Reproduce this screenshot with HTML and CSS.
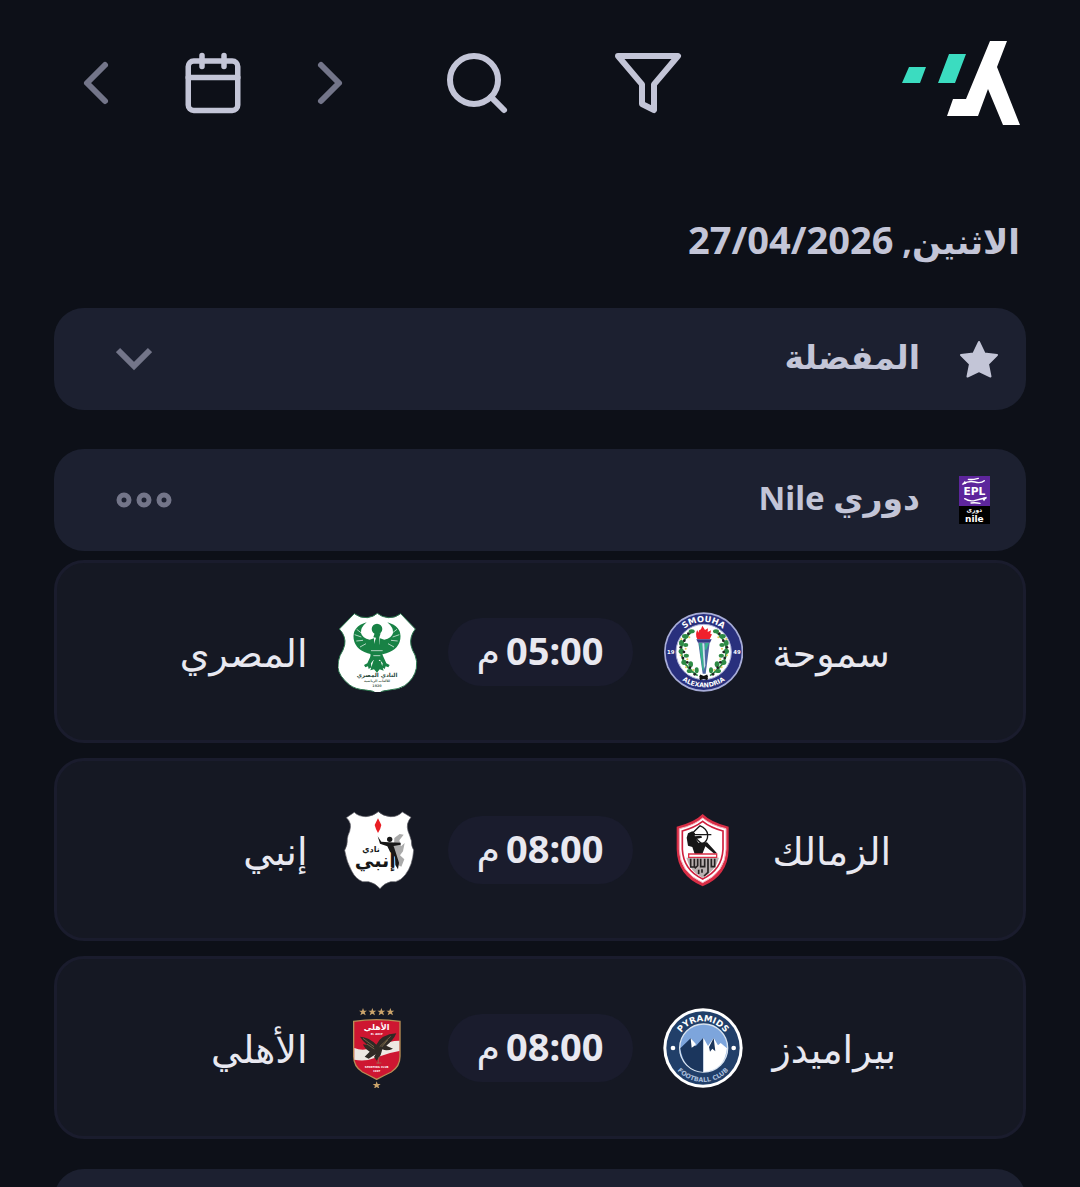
FILE: index.html
```html
<!DOCTYPE html>
<html lang="ar" dir="rtl">

<head>
    <meta charset="UTF-8">
    <meta name="viewport" content="width=device-width, initial-scale=1.0">
    <title>المباريات</title>
    <link rel="stylesheet" href="styles.css">
</head>

<body>
    <header>
        <a class="logo" href="#" aria-label="الرئيسية">
            <svg viewBox="0 0 117 84">
                <path fill="#3bdcc0" d="M6 26h17l-6 16H-1zM46 13h17L52 42H35z" />
                <path fill="#fff" d="M87 0h17l-10 26 23 58h-17L85 48 75 75H44l6-17h13z" />
            </svg>
        </a>
        <button class="filter" aria-label="تصفية">
            <svg class="icon" viewBox="0 0 24 24"><path d="M22 3H2l8 9.46V19l4 2v-8.54z" /></svg>
        </button>
        <button class="search" aria-label="بحث">
            <svg class="icon" viewBox="0 0 24 24"><circle cx="11" cy="11" r="8" /><path d="M21 21l-4.35-4.35" /></svg>
        </button>
        <nav>
            <button class="arrow" aria-label="اليوم التالي">
                <svg class="icon" viewBox="0 0 24 24"><path d="M9 18l6-6-6-6" /></svg>
            </button>
            <button class="calendar" aria-label="التقويم">
                <svg class="icon" viewBox="0 0 24 24"><rect x="3" y="4" width="18" height="18" rx="2" /><path d="M16 2v4M8 2v4M3 10h18" /></svg>
            </button>
            <button class="arrow" aria-label="اليوم السابق">
                <svg class="icon" viewBox="0 0 24 24"><path d="M15 18l-6-6 6-6" /></svg>
            </button>
        </nav>
    </header>

    <main>
        <h1>الاثنين, <span class="num">27/04/2026</span></h1>

        <section class="bar favorites">
            <svg class="star" viewBox="0 0 40 38"><path d="M20 2l5.500 11.500 12.500 1.500-9 9 2.500 12.500L20 31 8.500 36.500 11 24l-9-9 12.500-1.500z" /></svg>
            <h2>المفضلة</h2>
            <button aria-label="عرض المفضلة">
                <svg class="chevron" viewBox="0 0 36 24"><path d="M2 3l16 16L34 3" /></svg>
            </button>
        </section>

        <section class="league">
            <div class="bar">
                <svg class="epl" viewBox="120 108 93 144">
                    <path fill="#5d259c" d="M120 108h93v90h-93z" />
                    <path fill="#000" d="M120 198h93v54h-93z" />
                    <g fill="none" stroke="#fff" stroke-linecap="round" stroke-width="4">
                        <path d="M132 132q18-11 36-6t28-4M148 118q10 2 30-3M137 176q15 10 32 5t32-7M156 189q14-2 27 1" />
                    </g>
                    <path fill="#fff" d="M128 134l10-12 4 9zM204 170l-9 14-6-10z" />
                    <text class="epl-name" x="166" y="164">EPL</text>
                    <text class="epl-ar" x="166" y="215">دورى</text>
                    <text class="epl-nile" x="166" y="245">nile</text>
                </svg>
                <h2>دوري Nile</h2>
                <button aria-label="خيارات">
                    <svg class="dots" viewBox="0 0 56 16"><circle cx="8" cy="8" r="5" /><circle cx="28" cy="8" r="5" /><circle cx="48" cy="8" r="5" /></svg>
                </button>
            </div>

            <ul>
                <li>
                    <span class="home">سموحة</span>
                    <svg class="crest" viewBox="38 33 240 240">
                        <circle cx="160" cy="153" r="119" fill="#a8add8" />
                        <circle cx="160" cy="153" r="114" fill="#29307d" />
                        <circle cx="160" cy="153" r="83" fill="#fff" stroke="#a8add8" stroke-width="3" />
                        <path id="smTop" fill="none" d="M70 153a90 90 0 0 1 180 0" />
                        <path id="smBottom" fill="none" d="M54 153a106 106 0 0 0 212 0" />
                        <text class="smouha-top"><textPath href="#smTop" startOffset="50%">SMOUHA</textPath></text>
                        <text class="smouha-bottom"><textPath href="#smBottom" startOffset="50%">ALEXANDRIA</textPath></text>
                        <text class="year" x="61" y="158">19</text>
                        <text class="year" x="260" y="158">49</text>
                        <g id="wreath">
                            <path fill="none" stroke="#2e8b45" stroke-width="5" d="M126 91Q91 118 93 155T142 224" />
                            <g fill="#2e8b45">
                                <ellipse cx="124" cy="91" rx="9" ry="6" /><ellipse cx="105" cy="106" rx="10" ry="7" /><ellipse cx="93" cy="126" rx="7" ry="9" />
                                <ellipse cx="106" cy="132" rx="8" ry="6" /><ellipse cx="93" cy="151" rx="8" ry="8" /><ellipse cx="108" cy="164" rx="8" ry="6" />
                                <ellipse cx="101" cy="184" rx="8" ry="8" /><ellipse cx="121" cy="190" rx="7" ry="9" /><ellipse cx="118" cy="210" rx="9" ry="6" /><ellipse cx="139" cy="208" rx="6" ry="9" />
                            </g>
                            <g fill="#202222"><circle cx="114" cy="98" r="4" /><circle cx="102" cy="119" r="4" /><circle cx="91" cy="139" r="4" /><circle cx="101" cy="153" r="4" /><circle cx="98" cy="171" r="4" /><circle cx="111" cy="184" r="4" /><circle cx="119" cy="200" r="4" /><circle cx="133" cy="220" r="4" /></g>
                            <g fill="#e4ca58"><circle cx="117" cy="109" r="3" /><circle cx="93" cy="114" r="3" /><circle cx="106" cy="143" r="3" /><circle cx="91" cy="163" r="3" /><circle cx="111" cy="175" r="3" /><circle cx="107" cy="199" r="3" /><circle cx="129" cy="207" r="3" /></g>
                        </g>
                        <use href="#wreath" transform="matrix(-1 0 0 1 321 0)" />
                        <path fill="#f0202c" d="M141 115q-8-15 0-28l3 8q1-9 8-10l4-11 8 13 9-5-1 11 10-5-2 11 5 1-7 15z" />
                        <path fill="#343b86" d="M138 115h46l-5 10h-36z" />
                        <path fill="#4d67a2" d="M144 125h34l-12 93h-9z" />
                        <path fill="#36b38c" d="M146 126h10l5 85-5-8zM165 126h11l-8 20h-6z" />
                        <path fill="#cfe6ee" d="M156 127h6l3 67-4 10z" />
                        <path stroke="#111" stroke-width="8" d="M148 224l24 10M172 224l-24 10" />
                    </svg>
                    <time datetime="17:00"><span class="num">05:00</span><span>م</span></time>
                    <svg class="crest" viewBox="52 33 240 240">
                        <path fill="#fff" stroke="#2d7950" stroke-width="3" d="M101 38q18 14 39 12 18-2 30-13 13 12 34 13 20 1 36-12l44 46q-18 23-13 49 3 14 12 29 8 19 4 40-6 31-35 52-17 11-46 13-23 1-35 12-13-11-36-12-31-2-48-15-33-27-35-52-1-19 6-36 11-18 14-32 5-26-16-48z" />
                        <g fill="#188245">
                            <circle cx="169" cy="84" r="16" />
                            <path d="M162 97h18l-4 12 1 21 10 15-3 22-17 22-17-22-2-20 12-18 6-19-8-1z" />
                            <path id="wing" d="M138 64q-44 12-39 50 6 36 53 46l10-12-2-36-13 4q-22-4-26-20-2-16 17-32z" />
                            <use href="#wing" transform="matrix(-1 0 0 1 338 0)" />
                            <path d="M153 158l-13 29-10 5 4 7 8-3 2 8 8-5-1-12 12-16zM184 158l13 29 10 5-4 7-8-3-3 8-8-5 2-12-13-16zM158 180h22l9 29-12-4-8 10-9-10-11 3z" />
                        </g>
                        <path fill="none" stroke="#fff" stroke-width="2" d="M108 85l13 10M102 101l20 7M107 120l20-2M118 138l18-10M229 85l-13 10M236 101l-20 7M231 120l-20-2M220 138l-18-10M151 149h35M158 164h21" />
                        <text class="masry" x="169" y="228">النادي المصري</text>
                        <text class="masry-small" x="169" y="244">للألعاب الرياضية</text>
                        <text class="masry-small" x="169" y="259">1920</text>
                    </svg>
                    <span class="away">المصري</span>
                </li>
                <li>
                    <span class="home">الزمالك</span>
                    <svg class="crest" viewBox="38 28 240 240">
                        <path fill="#d92e46" d="M157 40q25 25 78 38v68q-2 80-78 111-76-31-78-111V78q53-13 78-38z" />
                        <path fill="#fff" stroke="#f6b0bd" stroke-width="3" d="M157 52q25 22 70 32v62q-2 69-70 100-69-31-70-100V84q45-10 70-32z" />
                        <path fill="#fff" stroke="#cf1f3d" stroke-width="5" d="M157 62q22 18 61 29v55q-3 62-61 89-58-27-61-89V91q38-11 61-29z" />
                        <path fill="none" stroke="#171717" stroke-width="4" d="M148 75q22 9 24 27 1 20-17 28M149 75l-26 26 31 28M123 102h60" />
                        <path fill="#171717" d="M113 98l13-6 8 6-1 9 20-2 2 6-18 4 7 11 26-1 30 33-8 1-27-22-9 23h-23l-7-21-13-4-4-24z" />
                        <path fill="#b9b0b0" d="M108 171h98q-10 39-49 61-38-20-49-61z" />
                        <path stroke="#262222" stroke-width="5" fill="none" d="M121 174v25h11v-25M142 174v21l-9 8M151 174v24h12v-24M173 174v41l-12 11M183 174v24h10v-24M145 207v13M155 206v10" />
                        <path fill="#fff" stroke="#d92e46" stroke-width="4" d="M115 160h84v10h-84z" />
                    </svg>
                    <time datetime="20:00"><span class="num">08:00</span><span>م</span></time>
                    <svg class="crest" viewBox="52 28 240 240">
                        <path fill="#fff" stroke="#5e5e65" stroke-width="2" d="M77 51l24-16q13 13 35 13 21-1 37-15 14 13 36 15 22 1 36-14l26 16q-16 18-9 41 6 15 10 29 0 18 7 28-3 46-25 74-13 17-29 21h-15q-20 5-32 21-13-16-34-21h-18q-21-8-33-32-15-26-21-62 9-16 8-35 1-9 7-22 8-26-10-41z" />
                        <path fill="#e91e24" d="M172 53q4 8 10 20-2 12-10 24-7-12-10-24 6-12 10-20z" />
                        <g fill="#aaa"><path d="M221 112l16-12 12 2-13 17 5 18 11-10-5 25-9 12 13 12-9 22-10-5-13-31z" /></g>
                        <g fill="#171717">
                            <circle cx="207" cy="116" r="8" />
                            <path d="M171 107l11 16 22 2 36 1v6l-21 4 7 22 9 28-3 20-8-13-1-25-15-15-8-16-22-8z" />
                        </g>
                        <text class="enppi-small" x="151" y="153">نادي</text>
                        <text class="enppi" x="164" y="198">إنبي</text>
                    </svg>
                    <span class="away">إنبي</span>
                </li>
                <li>
                    <span class="home">بيراميدز</span>
                    <svg class="crest" viewBox="38 37 240 240">
                        <circle cx="158" cy="157" r="119" fill="#fff" />
                        <circle cx="158" cy="157" r="110" fill="#213f69" />
                        <circle cx="160" cy="157" r="72" fill="#7da5dc" stroke="#d8e3ef" stroke-width="4" />
                        <path fill="#1b365d" d="M90 158l31-30 15 24 23-26v103q-60-5-69-71z" />
                        <path fill="#fff" d="M159 126l14 25 17-24 13 22 8-7 19 16q-7 66-71 71zM121 128l3 28 12-8v-4z" />
                        <path fill="#1b365d" d="M190 127l5 40-9-8-7 9-3-14z" />
                        <path id="pyTop" fill="none" d="M78 157a80 80 0 0 1 160 0" />
                        <path id="pyBottom" fill="none" d="M56 157a102 102 0 0 0 204 0" />
                        <text class="pyramids-top"><textPath href="#pyTop" startOffset="50%">PYRAMIDS</textPath></text>
                        <text class="pyramids-bottom"><textPath href="#pyBottom" startOffset="50%">FOOTBALL CLUB</textPath></text>
                        <circle cx="68" cy="157" r="7" fill="#fff" /><circle cx="250" cy="157" r="7" fill="#fff" />
                    </svg>
                    <time datetime="20:00"><span class="num">08:00</span><span>م</span></time>
                    <svg class="crest" viewBox="52 37 240 240">
                        <path id="goldStar" fill="#cba46b" d="M127 37l3 8h9l-7 5 3 9-8-5-8 5 3-9-7-5h9z" />
                        <use href="#goldStar" x="28" /><use href="#goldStar" x="55" /><use href="#goldStar" x="82" /><use href="#goldStar" x="41" y="220" />
                        <path fill="#ce1631" stroke="#b78e55" stroke-width="4" d="M99 77q34-5 69-5t70 5v105q0 31-26 47-21 10-44 22-23-12-43-22-26-16-26-47z" />
                        <path fill="#eee8e3" d="M101 157q29 12 67-5t68-17v31q-33 5-67 19t-68 7z" />
                        <path fill="#2f2a25" d="M118 123q28 2 49 24 15-31 60-34-8 20-30 37l20 9q-18 8-32 2l-5 17-12 17-8-11 5-8-21 13-12-6 15-15q-15-8-20-22l13 2q-14-11-22-25z" />
                        <path fill="none" stroke="#968057" stroke-width="2" d="M127 128l33 25M139 145l22 15M210 122l-33 31M201 133l-18 21M175 184l-3 20M167 202h15" />
                        <text class="ahly" x="168" y="102">الأهلي</text>
                        <text class="ahly-small" x="168" y="118">EL AHLY</text>
                        <text class="ahly-small" x="168" y="216">SPORTING CLUB</text>
                        <text class="ahly-small" x="168" y="228">1907</text>
                    </svg>
                    <span class="away">الأهلي</span>
                </li>
            </ul>
        </section>

        <section class="bar"></section>
    </main>
</body>

</html>
```

FILE: styles.css
```css
* {
    box-sizing: border-box;
}

body {
    display: flex;
    flex-direction: column;
    height: 100vh;
    margin: 0;
    background-color: #0d1018;
    color: #c3c5d7;
    font-family: "Noto Sans", "DejaVu Sans", sans-serif;
}

header {
    display: flex;
    flex: none;
    align-items: center;
    height: 166px;
    padding: 0 60px;
}

button {
    display: flex;
    align-items: center;
    justify-content: center;
    padding: 0;
    border: none;
    background: none;
    color: inherit;
    cursor: pointer;
}

svg {
    display: block;
    direction: ltr;
}

.logo {
    margin-left: auto;
}

.logo svg {
    width: 117px;
    height: 84px;
    overflow: visible;
}

.icon {
    width: 72px;
    height: 72px;
    fill: none;
    stroke: currentColor;
    stroke-width: 2;
    stroke-linecap: round;
    stroke-linejoin: round;
}

.search {
    margin: 0 99px 0 75px;
}

nav {
    display: flex;
    align-items: center;
    gap: 48px;
}

.calendar .icon {
    width: 66px;
    height: 66px;
}

.arrow {
    color: #737589;
}

main {
    flex: 1;
    min-height: 0;
    padding: 0 54px;
    overflow-y: auto;
    scrollbar-width: none;
}

h1 {
    margin: 0;
    padding: 0 6px;
    height: 142px;
    line-height: 146px;
    font-size: 34px;
}

h2 {
    margin: 0;
    padding-bottom: 4px;
    font-size: 33px;
    line-height: 48px;
}

.bar {
    display: flex;
    align-items: center;
    height: 102px;
    padding: 0 27px 0 62px;
    border-radius: 30px;
    background-color: #1c2030;
}

.bar h2 {
    margin-right: 39px;
}

.bar button {
    margin-right: auto;
    color: #737589;
}

.favorites {
    margin-bottom: 39px;
}

.star {
    width: 40px;
    height: 38px;
    fill: #c3c5d7;
    stroke: #c3c5d7;
    stroke-width: 2;
    stroke-linejoin: round;
}

.chevron {
    width: 36px;
    height: 24px;
    fill: none;
    stroke: currentColor;
    stroke-width: 6;
}

.epl {
    width: 31px;
    height: 48px;
    margin-right: 9px;
}

.dots {
    width: 56px;
    height: 16px;
    fill: none;
    stroke: currentColor;
    stroke-width: 5;
}

.league {
    margin-bottom: 30px;
}

ul {
    display: flex;
    flex-direction: column;
    gap: 15px;
    margin: 9px 0 0;
    padding: 0;
    list-style: none;
}

li {
    display: grid;
    grid-template-columns: 1fr 80px 185px 80px 1fr;
    gap: 30px;
    align-items: center;
    height: 183px;
    border: 3px solid #1a1c2d;
    border-radius: 30px;
    background-color: #151823;
    color: #e8e8f0;
    font-size: 38px;
}

.home {
    text-align: left;
}

.crest {
    width: 80px;
    height: 80px;
}

time {
    display: flex;
    justify-content: center;
    gap: 6px;
    height: 68px;
    border-radius: 34px;
    background-color: #1a1c2d;
    line-height: 64px;
}

.num {
    font-size: 38px;
    font-weight: bold;
}

/* lettering on the crests */
text {
    fill: #fff;
    font-family: "DejaVu Sans", sans-serif;
    font-weight: bold;
    text-anchor: middle;
}

.epl-name {
    font-size: 32px;
}

.epl-ar {
    font-size: 18px;
}

.epl-nile {
    font-size: 27px;
}

.smouha-top {
    font-size: 25px;
}

.smouha-bottom {
    font-size: 19px;
}

.year {
    font-size: 16px;
}

.masry {
    font-size: 17px;
    fill: #28483a;
}

.masry-small {
    font-size: 10px;
    fill: #57705f;
}

.enppi {
    font-size: 58px;
    fill: #171717;
}

.enppi-small {
    font-size: 24px;
    fill: #171717;
}

.pyramids-top {
    font-size: 26px;
}

.pyramids-bottom {
    font-size: 19px;
    fill: #a9bedb;
}

.ahly {
    font-size: 24px;
}

.ahly-small {
    font-size: 8px;
}
```
